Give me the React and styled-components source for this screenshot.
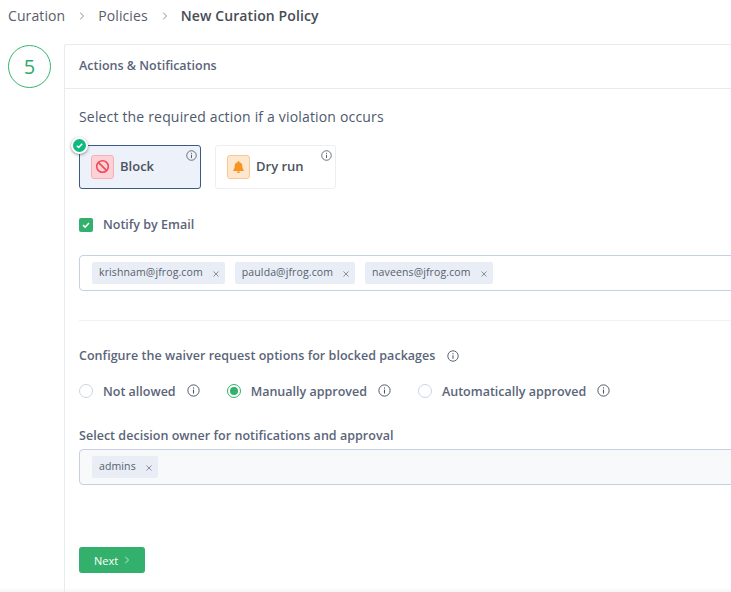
import React from 'react';
import styled, { createGlobalStyle } from 'styled-components';

const GlobalStyle = createGlobalStyle`
  html, body {
    margin: 0;
    padding: 0;
    background: #fff;
    overflow: hidden;
  }
  body {
    font-family: 'Open Sans', 'Liberation Sans', sans-serif;
  }
`;

const Page = styled.div`
  width: 731px;
  height: 592px;
  overflow: hidden;
  background: linear-gradient(to bottom, #fff 588px, #f5f5f6 592px);
`;

const Breadcrumbs = styled.div`
  display: flex;
  align-items: center;
  height: 31px;
  padding-left: 8px;
  font-size: 14px;
  letter-spacing: 0.1px;
`;

const Crumb = styled.span`
  font-weight: ${(p) => (p.$current ? 600 : 400)};
  color: ${(p) => (p.$current ? '#474c55' : '#585e68')};
`;

const CrumbSep = styled.span`
  display: flex;
  margin: 1px 13px 0 14px;
`;

const Body = styled.div`
  display: flex;
  align-items: flex-start;
  padding: 13px 0 0 8px;
`;

const StepCircle = styled.div`
  flex: none;
  box-sizing: border-box;
  width: 43px;
  height: 43px;
  margin: 1px 13px 0 0;
  border: 1px solid #35b36f;
  border-radius: 50%;
  display: flex;
  align-items: center;
  justify-content: center;
  font-size: 20px;
  font-weight: 500;
  color: #2fab68;
`;

const Card = styled.div`
  flex: none;
  box-sizing: border-box;
  width: 720px;
  height: 548px;
  border: 1px solid #e8eaee;
  border-width: 1px 0 0 1px;
  border-radius: 3px 0 0 0;
`;

const CardHeader = styled.div`
  box-sizing: border-box;
  height: 44px;
  display: flex;
  align-items: center;
  padding: 0 0 2px 14px;
  border-bottom: 1px solid #e8eaee;
  font-size: 12.5px;
  font-weight: 600;
  color: #5a6579;
`;

const CardBody = styled.div`
  padding: 0 0 0 14px;
`;

const Question = styled.div`
  margin-top: 18px;
  font-size: 14px;
  line-height: 20px;
  letter-spacing: 0.17px;
  color: #4d596c;
`;

const ActionRow = styled.div`
  display: flex;
  gap: 14px;
  margin-top: 18px;
`;

const ActionCard = styled.div`
  position: relative;
  box-sizing: border-box;
  width: ${(p) => p.$width}px;
  height: 44px;
  display: flex;
  align-items: center;
  gap: 6px;
  padding: 0 0 1px 11px;
  border-radius: 3px;
  border: 1px solid ${(p) => (p.$active ? '#3b5a86' : '#eceef1')};
  background: ${(p) => (p.$active ? '#edf1f9' : '#fff')};
  font-size: 13px;
  font-weight: 550;
  color: #4a5361;
`;

const ActionLabel = styled.span`
  position: relative;
  top: -1px;
`;

const ActionIcon = styled.span`
  box-sizing: border-box;
  width: 23px;
  height: 24px;
  display: flex;
  align-items: center;
  justify-content: center;
  border-radius: 3px;
  border: 1px solid ${(p) => p.$border};
  background: ${(p) => p.$bg};
`;

const Corner = styled.span`
  position: absolute;
  top: 4px;
  right: 3px;
  display: flex;
`;

const SelectedBadge = styled.span`
  position: absolute;
  top: -9px;
  left: -9px;
  box-sizing: border-box;
  width: 17px;
  height: 17px;
  display: flex;
  align-items: center;
  justify-content: center;
  border-radius: 50%;
  border: 2px solid #fff;
  background: #10b981;
  box-shadow: 0 1px 3px rgba(40, 70, 40, 0.55);
`;

const CheckRow = styled.div`
  display: flex;
  align-items: center;
  gap: 10px;
  margin-top: 27px;
  font-size: 12.5px;
  font-weight: 600;
  color: #5a6579;
`;

const CheckBox = styled.span`
  width: 14px;
  height: 14px;
  display: flex;
  align-items: center;
  justify-content: center;
  border-radius: 2px;
  background: #33b06b;
`;

const TagField = styled.div`
  box-sizing: border-box;
  height: 36px;
  display: flex;
  align-items: center;
  gap: 10px;
  padding-left: 12px;
  border: 1px solid #c5d0e2;
  border-radius: 4px;
  background: ${(p) => (p.$muted ? '#f8f9fb' : '#fff')};
  margin-top: ${(p) => p.$top}px;
`;

const Tag = styled.span`
  box-sizing: border-box;
  height: 22px;
  display: flex;
  align-items: center;
  gap: 10px;
  padding: 0 6px 0 7px;
  border-radius: 2px;
  background: #e9edf5;
  font-size: 10.5px;
  letter-spacing: 0.12px;
  color: #56606f;
`;

const TagText = styled.span`
  position: relative;
  top: -1px;
`;

const Divider = styled.div`
  height: 1px;
  margin-top: 29px;
  background: #eff1f5;
`;

const SectionTitle = styled.div`
  display: flex;
  align-items: center;
  gap: 12px;
  font-size: 12.5px;
  font-weight: 600;
  letter-spacing: 0.03px;
  line-height: 16px;
  color: #5a6579;
  margin-top: ${(p) => p.$top}px;
`;

const RadioRow = styled.div`
  display: flex;
  align-items: center;
  margin-top: 17px;
  height: 20px;
`;

const RadioItem = styled.div`
  display: flex;
  align-items: center;
  margin-right: 27px;
  font-size: 12.5px;
  font-weight: 600;
  color: #5a6579;
`;

const RadioDot = styled.span`
  box-sizing: border-box;
  width: 14px;
  height: 14px;
  margin-right: 10px;
  border-radius: 50%;
  border: 1px solid ${(p) => (p.$on ? '#33b06b' : '#ccd5e4')};
  display: flex;
  align-items: center;
  justify-content: center;

  &::after {
    content: '';
    display: ${(p) => (p.$on ? 'block' : 'none')};
    width: 8px;
    height: 8px;
    border-radius: 50%;
    background: #33b06b;
  }
`;

const RadioInfo = styled.span`
  display: flex;
  margin: -2px 0 0 11px;
`;

const NextButton = styled.button`
  box-sizing: border-box;
  display: flex;
  align-items: center;
  gap: 6px;
  width: 66px;
  height: 26px;
  margin-top: 62px;
  padding: 0 0 0 15px;
  border: none;
  border-radius: 3px;
  background: #33b06b;
  color: #fff;
  font-family: inherit;
  font-size: 11px;
  font-weight: 500;
`;

const Info = ({ size = 11 }) => (
  <svg width={size} height={size} viewBox="0 0 12 12" fill="none">
    <circle cx="6" cy="6" r="5.2" stroke="#4d5562" strokeWidth="0.9" />
    <rect x="5.5" y="5.2" width="1" height="3.6" fill="#4d5562" />
    <rect x="5.5" y="3.1" width="1" height="1.1" fill="#4d5562" />
  </svg>
);

const Close = () => (
  <svg width="6" height="6" viewBox="0 0 6 6" style={{ marginTop: 2 }}>
    <path d="M.5.5l5 5M5.5.5l-5 5" stroke="#6d7684" strokeWidth="0.8" />
  </svg>
);

const Chevron = ({ color = '#7b818b' }) => (
  <svg width="6" height="8" viewBox="0 0 6 8" fill="none" style={{ display: 'block' }}>
    <path d="M1.2.8L4.6 4 1.2 7.2" stroke={color} strokeWidth="0.9" />
  </svg>
);

const Check = ({ size = 10, width = 1.6 }) => (
  <svg width={size} height={size} viewBox="0 0 10 10" fill="none">
    <path d="M2 5.2l2.1 2L8 3" stroke="#fff" strokeWidth={width} />
  </svg>
);

const Tags = ['krishnam@jfrog.com', 'paulda@jfrog.com', 'naveens@jfrog.com'];

export default function App() {
  return (
    <Page>
      <GlobalStyle />
      <Breadcrumbs>
        <Crumb>Curation</Crumb>
        <CrumbSep><Chevron /></CrumbSep>
        <Crumb>Policies</Crumb>
        <CrumbSep><Chevron /></CrumbSep>
        <Crumb $current>New Curation Policy</Crumb>
      </Breadcrumbs>
      <Body>
        <StepCircle>5</StepCircle>
        <Card>
          <CardHeader>Actions &amp; Notifications</CardHeader>
          <CardBody>
            <Question>Select the required action if a violation occurs</Question>
            <ActionRow>
              <ActionCard $active $width={122}>
                <SelectedBadge><Check size={9} /></SelectedBadge>
                <ActionIcon $bg="#fdd2d6" $border="#f9aeb6">
                  <svg width="15" height="15" viewBox="0 0 16 16" fill="none">
                    <circle cx="8" cy="8" r="6.2" stroke="#f0485c" strokeWidth="1.7" />
                    <path d="M3.8 3.8l8.4 8.4" stroke="#f0485c" strokeWidth="1.7" />
                  </svg>
                </ActionIcon>
                <ActionLabel>Block</ActionLabel>
                <Corner><Info /></Corner>
              </ActionCard>
              <ActionCard $width={121}>
                <ActionIcon $bg="#fde7cf" $border="#fbc88f">
                  <svg width="13" height="14" viewBox="0 0 13 14" fill="#f7931e">
                    <path d="M6.5 1c.5 0 .9.4.9.9v.3c1.9.4 2.9 1.9 2.9 3.8 0 2 .5 3 1.4 3.9v1H1.3v-1c.9-.9 1.4-1.9 1.4-3.9 0-1.9 1-3.4 2.9-3.8v-.3c0-.5.4-.9.9-.9z" />
                    <path d="M4.9 11.6h3.2c0 .9-.7 1.5-1.6 1.5s-1.6-.6-1.6-1.5z" />
                  </svg>
                </ActionIcon>
                <ActionLabel>Dry run</ActionLabel>
                <Corner><Info /></Corner>
              </ActionCard>
            </ActionRow>
            <CheckRow>
              <CheckBox><Check /></CheckBox>
              Notify by Email
            </CheckRow>
            <TagField $top={22}>
              {Tags.map((t) => (
                <Tag key={t}>
                  <TagText>{t}</TagText>
                  <Close />
                </Tag>
              ))}
            </TagField>
            <Divider />
            <SectionTitle $top={27}>
              Configure the waiver request options for blocked packages
              <Info size={12} />
            </SectionTitle>
            <RadioRow>
              <RadioItem>
                <RadioDot />
                Not allowed
                <RadioInfo><Info size={13} /></RadioInfo>
              </RadioItem>
              <RadioItem>
                <RadioDot $on />
                Manually approved
                <RadioInfo><Info size={13} /></RadioInfo>
              </RadioItem>
              <RadioItem>
                <RadioDot />
                Automatically approved
                <RadioInfo><Info size={13} /></RadioInfo>
              </RadioItem>
            </RadioRow>
            <SectionTitle $top={27}>Select decision owner for notifications and approval</SectionTitle>
            <TagField $muted $top={5}>
              <Tag>
                <TagText>admins</TagText>
                <Close />
              </Tag>
            </TagField>
            <NextButton>
              Next
              <Chevron color="#cfeedd" />
            </NextButton>
          </CardBody>
        </Card>
      </Body>
    </Page>
  );
}
